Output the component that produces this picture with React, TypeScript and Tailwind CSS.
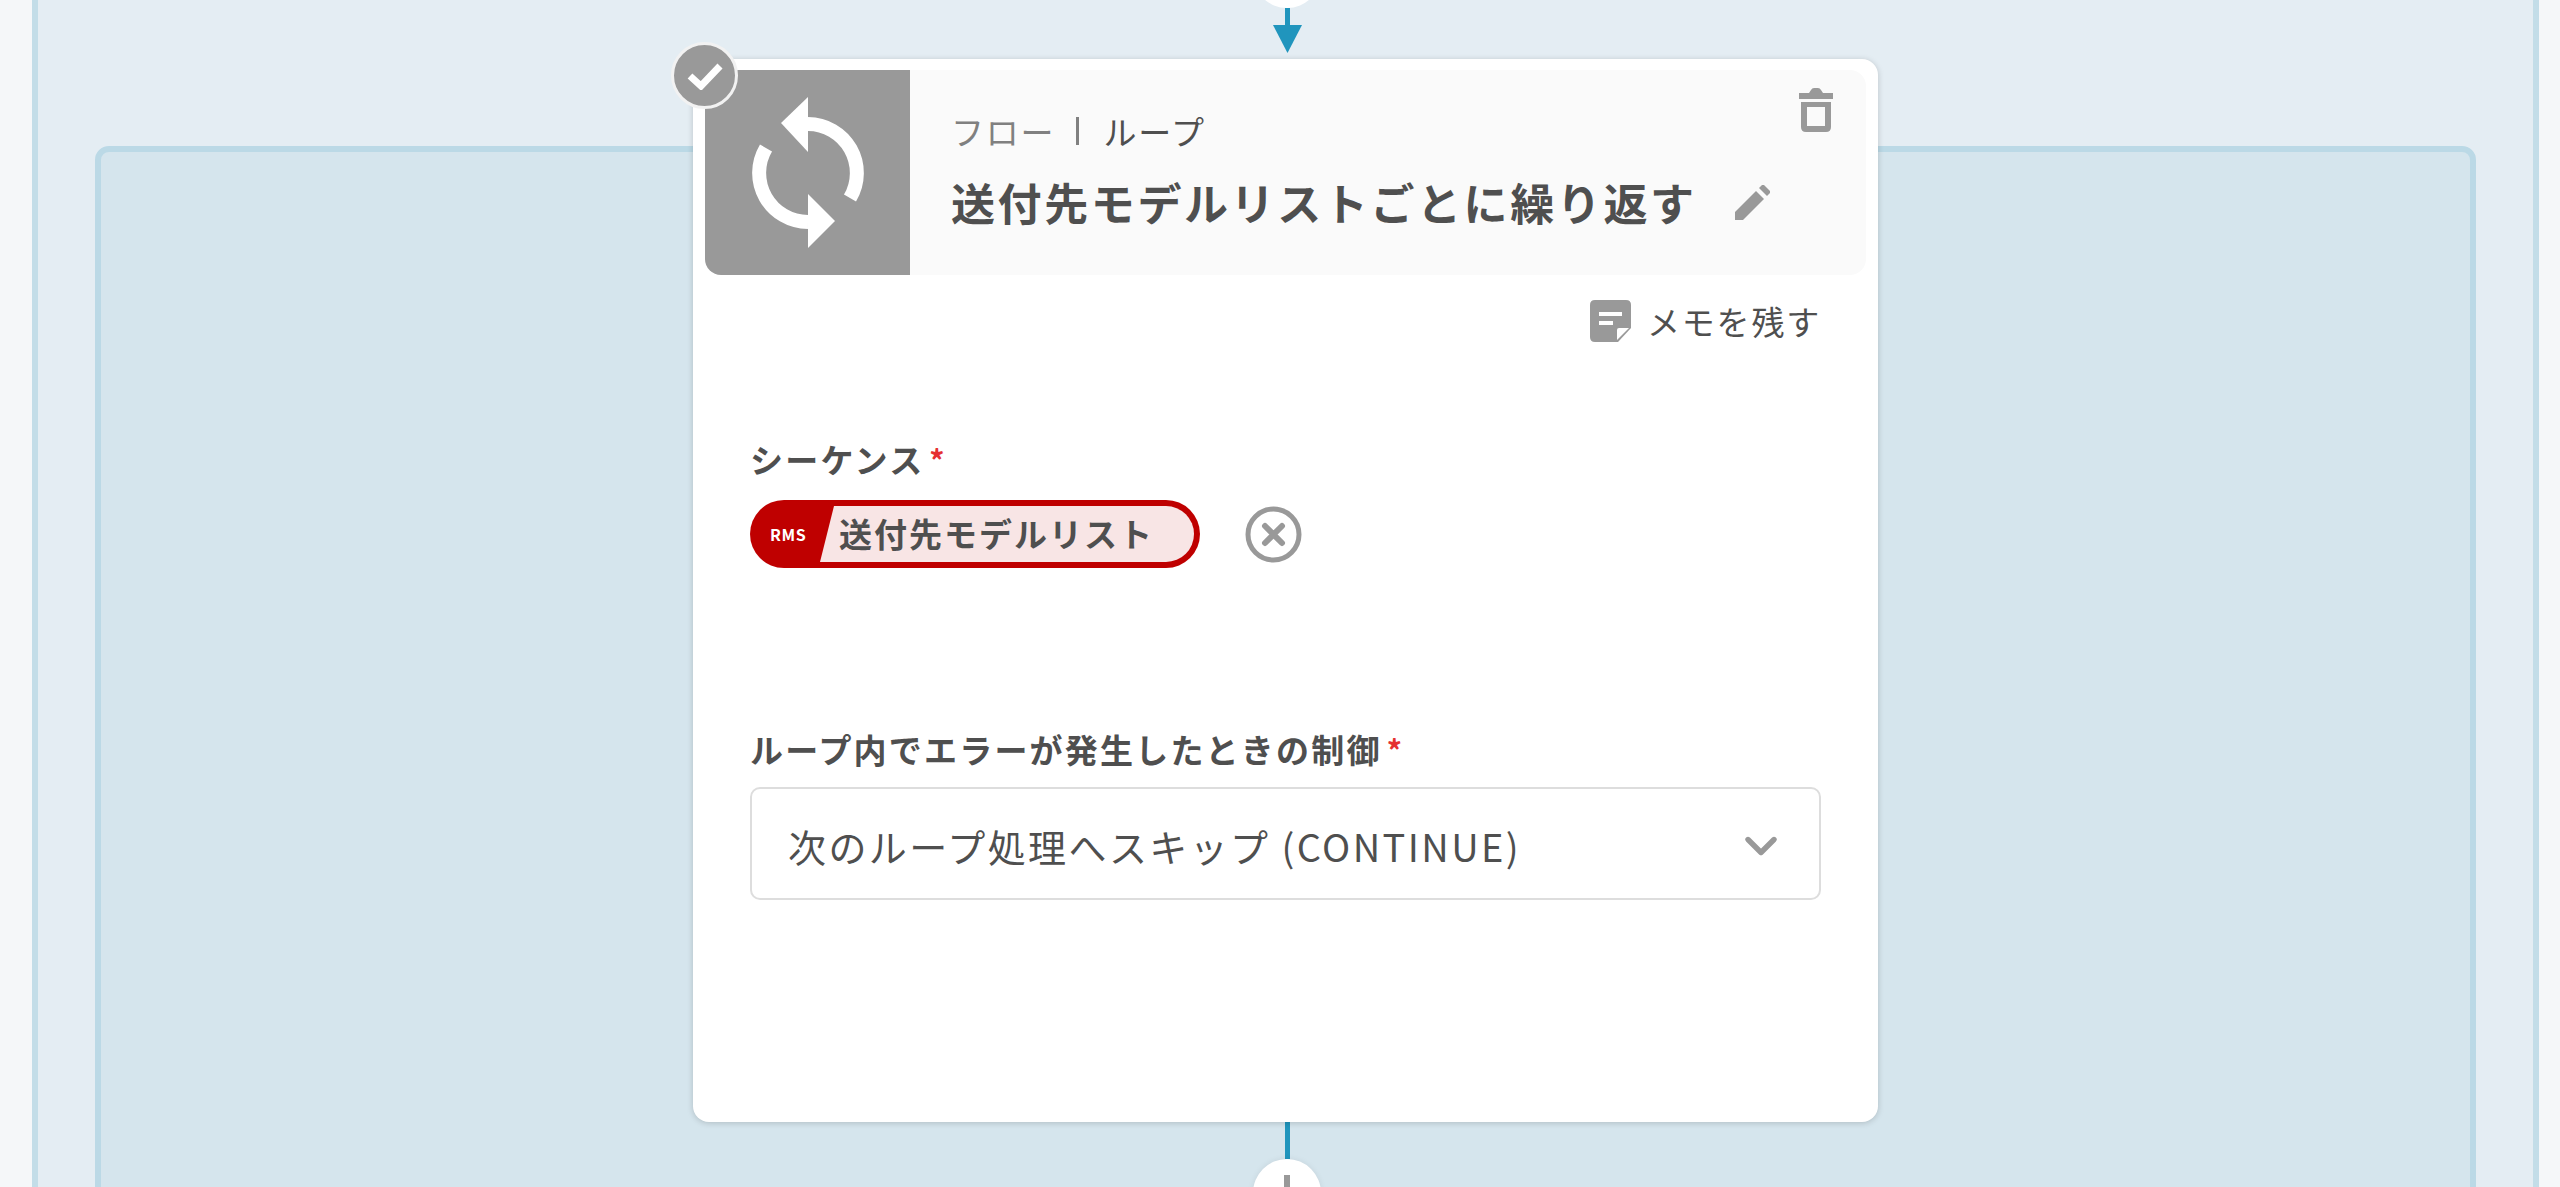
import { ChevronDown } from 'lucide-react'

const jp = { fontFamily: '"Noto Sans CJK JP", "Noto Sans", sans-serif' }

function LoopIcon() {
  return (
    <svg width="120" height="160" viewBox="0 0 120 160" fill="none">
      <path d="M60 31A49 49 0 0 1 102 105" stroke="#fff" strokeWidth="14" />
      <path d="M60 129A49 49 0 0 1 18 55" stroke="#fff" strokeWidth="14" />
      <path d="M33 30L60 4V59Z" fill="#fff" />
      <path d="M87 128L60 101V155Z" fill="#fff" />
    </svg>
  )
}

function TrashIcon() {
  return (
    <svg width="34" height="44" viewBox="0 0 34 44" fill="#999">
      <path d="M0 5h10l2-3q1-2 3-2h4q2 0 3 2l2 3h10v6H0Z" />
      <path fillRule="evenodd" d="M2 14h30v25q0 5-5 5H7q-5 0-5-5Zm6 5v19h18V19Z" />
    </svg>
  )
}

function PencilIcon() {
  return (
    <svg width="35" height="35" viewBox="0 0 35 35" fill="#999">
      <path d="M0 27L21 6l8 8L8 35H0Z" />
      <path d="M24 3l3-3q1-.6 2 0l6 6q.6 1 0 2l-3 3Z" />
    </svg>
  )
}

function MemoIcon() {
  return (
    <svg width="41" height="42" viewBox="0 0 41 42">
      <path d="M5 0h31q5 0 5 5v23L28 42H5q-5 0-5-5V5q0-5 5-5Z" fill="#999" />
      <path d="M9 12h23v4H9ZM9 21h14v4H9Z" fill="#fff" />
      <path d="M27 40V30q0-2 2-2h10Z" fill="#fff" />
    </svg>
  )
}

function ClearIcon() {
  return (
    <svg width="57" height="57" viewBox="0 0 57 57" fill="none" stroke="#999">
      <circle cx="28.5" cy="28.5" r="25.5" strokeWidth="5" />
      <path d="M20 20l17 17M37 20L20 37" strokeWidth="6" strokeLinecap="round" />
    </svg>
  )
}

function Label({ text }: { text: string }) {
  return (
    <div className="flex items-start text-[33px] leading-[48px] font-bold tracking-[2.2px] text-[#4f4f4f]">
      {text}
      <span className="mt-[6px] ml-[5px] text-[30px] leading-[36px] text-[#e53030]">*</span>
    </div>
  )
}

export default function App() {
  return (
    <div className="h-[1187px] w-full overflow-hidden bg-[#f5f7f9] pr-[21px] pl-[32px]" style={jp}>
      <div className="relative h-full border-x-[6px] border-[#c3dde8] bg-[#e4edf3] px-[57px] pt-[146px]">
        {/* incoming connector */}
        <div className="absolute top-[-60px] left-[1215px] flex flex-col items-center">
          <div className="h-[68px] w-[68px] rounded-full bg-white" />
          <div className="h-[18px] w-[5px] bg-[#2095bd]" />
          <svg width="29" height="28" viewBox="0 0 29 28" className="-mt-px">
            <path d="M0 0h29L14.500 28Z" fill="#2095bd" />
          </svg>
        </div>

        <div className="flex h-[1100px] flex-col items-center rounded-[14px] border-[6px] border-[#bbd9e6] bg-[#d5e5ed]">
          <div className="relative -mt-[93px] h-[1063px] w-[1185px] shrink-0 rounded-[16px] bg-white px-[12px] pt-[11px] shadow-[0_1px_6px_rgba(0,0,0,0.18)]">
            <div className="absolute top-[-17px] left-[-22px] flex h-[67px] w-[67px] items-center justify-center rounded-full border-[3px] border-[#f2f2f2] bg-[#999]">
              <svg width="36" height="28" viewBox="0 0 36 28" fill="none">
                <path d="M3 14l11 10L33 4" stroke="#fff" strokeWidth="7" />
              </svg>
            </div>

            <div className="flex h-[205px] rounded-[16px] bg-[#fafafa]">
              <div className="flex w-[205px] shrink-0 items-center justify-center rounded-l-[16px] rounded-tl-none bg-[#999]">
                <LoopIcon />
              </div>
              <div className="flex-1 pt-[37px] pl-[41px]">
                <div className="flex items-center text-[33px] leading-[48px] tracking-[1.8px] text-[#808080]">
                  フロー
                  <span className="mr-[24px] ml-[21px] h-[28px] w-[3px] bg-[#808080]" />
                  <span className="text-[#4f4f4f]">ループ</span>
                </div>
                <div className="mt-[14px] flex items-center text-[44px] leading-[66px] font-bold tracking-[2.600px] text-[#4f4f4f]">
                  送付先モデルリストごとに繰り返す
                  <span className="ml-[38px] flex">
                    <PencilIcon />
                  </span>
                </div>
              </div>
              <div className="pt-[18px] pr-[33px]">
                <TrashIcon />
              </div>
            </div>

            <div className="mt-[25px] flex items-center justify-end gap-[16px] pr-[45px] text-[33px] leading-[42px] tracking-[1.8px] text-[#4f4f4f]">
              <MemoIcon />
              メモを残す
            </div>

            <div className="mt-[93px] px-[45px]">
              <Label text="シーケンス" />
              <div className="mt-[17px] flex items-center">
                <div className="flex h-[68px] w-[450px] items-stretch rounded-full bg-[#bf0000] py-[6px] pr-[6px]">
                  <span className="flex w-[70px] shrink-0 items-center pl-[20px] text-[16px] font-bold tracking-[0.6px] text-white">
                    RMS
                  </span>
                  <div className="flex flex-1 items-center rounded-r-full bg-[#f8e5e5] pl-[19px] text-[33px] font-bold tracking-[2px] text-[#4f4f4f] [clip-path:polygon(14px_0,100%_0,100%_100%,0_100%)]">
                    送付先モデルリスト
                  </div>
                </div>
                <span className="ml-[45px] flex">
                  <ClearIcon />
                </span>
              </div>

              <div className="mt-[157px]">
                <Label text="ループ内でエラーが発生したときの制御" />
              </div>
              <div className="mt-[14px] flex h-[113px] items-center justify-between rounded-[10px] border-2 border-[#dddddd] pt-[4px] pr-[32px] pl-[36px] text-[38px] tracking-[2.4px] text-[#4f4f4f]">
                次のループ処理へスキップ (CONTINUE)
                <ChevronDown size={52} strokeWidth={2.5} color="#999" className="shrink-0" />
              </div>
            </div>
          </div>

          {/* outgoing connector */}
          <div className="ml-[3px] h-[37px] w-[5px] shrink-0 bg-[#2095bd]" />
          <div className="ml-[3px] flex h-[68px] w-[68px] shrink-0 items-center justify-center rounded-full bg-white shadow-[0_0_6px_rgba(0,0,0,0.08)]">
            <svg width="36" height="36" viewBox="0 0 36 36" fill="#999">
              <path d="M15 0h6v15h15v6H21v15h-6V21H0v-6h15Z" />
            </svg>
          </div>
        </div>
      </div>
    </div>
  )
}
